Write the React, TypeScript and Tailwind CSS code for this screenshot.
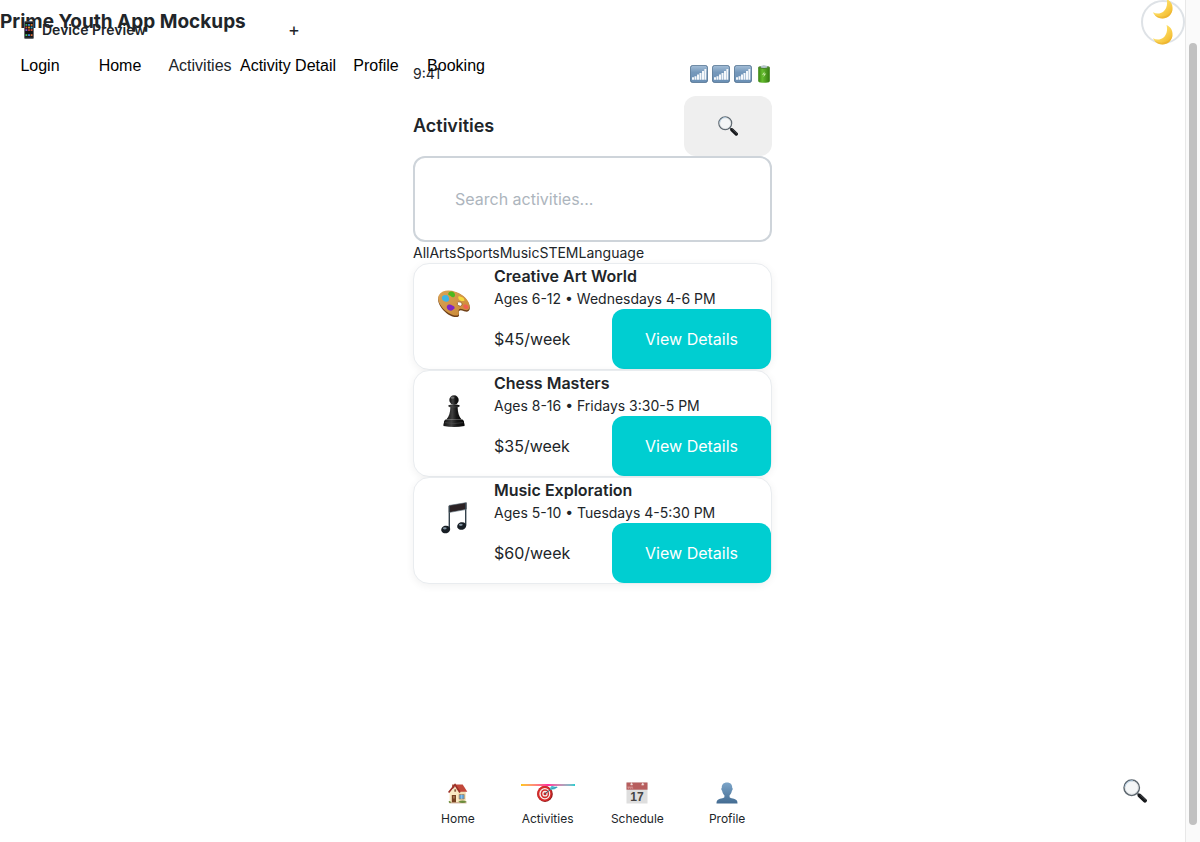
import React from 'react';

function PhoneIcon() {
  return (
    <svg viewBox="0 0 10 18" className="h-[18px] w-2.5" aria-hidden="true">
      <rect x="0.3" y="0.3" width="9.4" height="17.4" rx="1.2" fill="#26282c" stroke="#77797d" strokeWidth="0.5" />
      <rect x="1.2" y="2" width="7.6" height="13.6" fill="#111" />
      {[3, 5.6, 8.2, 13.2].map((y, r) => (
        <g key={y}>
          <rect x="1.5" y={y} width="1.8" height="1.8" fill={['#3aa657', '#d0453a', '#7b5bd6', '#44c767'][r]} />
          <rect x="4.1" y={y} width="1.8" height="1.8" fill={['#3f8ff0', '#e0a030', '#c23b3b', '#3f8ff0'][r]} />
          <rect x="6.7" y={y} width="1.8" height="1.8" fill={['#e07a30', '#3aa6c7', '#cf4f38', '#d66a3a'][r]} />
        </g>
      ))}
    </svg>
  );
}

function MoonIcon() {
  return (
    <svg viewBox="0 0 22 22" className="h-[22px] w-[22px] shrink-0" aria-hidden="true">
      <defs>
        <linearGradient id="moon" x1="0" y1="0" x2="1" y2="1">
          <stop offset="0.35" stopColor="#ffe168" />
          <stop offset="1" stopColor="#efb01f" />
        </linearGradient>
      </defs>
      <path d="M14.500 1c4.200 1.800 6.500 5.700 6 10.200-.6 5.300-4.700 9.300-10.100 9.300-4.300 0-7.700-2.300-9.400-6.200 3.300 1.700 7.200 1.800 10.200-.5 3.500-2.800 4.700-7.900 3.300-12.800z" fill="url(#moon)" />
      <path d="M20.500 11c-.6 5.400-4.700 9.500-10.100 9.500-3.500 0-6.400-1.500-8.300-4.300 6.400 4.800 15.800 2.400 18.400-5.200z" fill="#e8ac2b" opacity=".5" />
    </svg>
  );
}

function SearchIcon({ className }: { className: string }) {
  return (
    <svg viewBox="0 0 24 24" className={className} aria-hidden="true">
      <path d="M14.500 14.500l3 3" stroke="#555b61" strokeWidth="1.800" />
      <path d="M16.600 16.600l5.300 5" stroke="#15171a" strokeWidth="4" strokeLinecap="round" />
      <path d="M17.600 16.300l4.800 4.500" stroke="#666a70" strokeWidth=".7" strokeLinecap="round" />
      <circle cx="8.700" cy="8.700" r="7.700" fill="#f4f6f7" stroke="#5e6870" strokeWidth="1.500" />
      <path d="M2 8a6.900 6.900 0 0 1 8-6.100" fill="none" stroke="#9cc4e6" strokeWidth="1" />
      <circle cx="8.700" cy="8.700" r="6.500" fill="none" stroke="#d5dadd" strokeWidth=".7" />
    </svg>
  );
}

function SignalIcon() {
  return (
    <svg viewBox="0 0 18 18" className="h-[18px] w-[18px]" aria-hidden="true">
      <defs>
        <linearGradient id="signal" x1="0" y1="0" x2="0" y2="1">
          <stop offset="0" stopColor="#a5bfd8" />
          <stop offset=".4" stopColor="#7598bb" />
          <stop offset="1" stopColor="#6a8fb4" />
        </linearGradient>
      </defs>
      <rect x=".4" y=".4" width="17.200" height="17.200" rx="2.400" fill="url(#signal)" stroke="#49698a" strokeWidth=".8" />
      <path d="M2 12.300h2v2.400H2zM4.500 11.200h2v3.500h-2zM7 9.600h2v5.100H7zM9.500 8h2v6.700h-2zM12 6h2v8.700h-2zM14.400 4h1.900v10.700h-1.900z" fill="#f5f8fb" />
    </svg>
  );
}

function BatteryIcon() {
  return (
    <svg viewBox="0 0 12 18" className="h-[18px] w-3" aria-hidden="true">
      <defs>
        <linearGradient id="battery">
          <stop offset="0" stopColor="#38820f" />
          <stop offset=".35" stopColor="#65bd2e" />
          <stop offset="1" stopColor="#32780f" />
        </linearGradient>
      </defs>
      <path d="M.2 2.500v13.400c0 2.500 11.600 2.500 11.600 0V2.500z" fill="url(#battery)" />
      <ellipse cx="6" cy="2.400" rx="5.800" ry="1.700" fill="#4c842e" />
      <ellipse cx="6" cy="1.700" rx="3.500" ry="1.200" fill="#b8c6cf" />
      <path d="M6.600 6.500L4 9.800l2-.2-.6 2.600 2.800-3.600-2 .2z" fill="#c4e8a2" />
    </svg>
  );
}

function PaletteIcon() {
  return (
    <svg viewBox="0 0 32 28" className="h-7 w-8" aria-hidden="true">
      <defs>
        <linearGradient id="palette" x1="0" y1="0" x2="1" y2="1">
          <stop offset="0" stopColor="#dba456" />
          <stop offset="1" stopColor="#c98735" />
        </linearGradient>
      </defs>
      <path d="M1 6C4 .6 11.500.3 18 2.600c7.500 2.600 13 8.300 13.800 14.600.4 3.200-1.700 4.900-4.500 4.400-2.200-.4-4.300-2.300-6-.8-1.900 1.600 1.600 5.300-2 6.200C11 28.400-3.500 14 1 6z" fill="#704018" />
      <path d="M1 5C4-.2 11.500-.3 18 1.900c7.500 2.600 13 8.200 13.700 14.100.4 3-1.700 4.600-4.500 4.100-2.200-.4-4.300-2.400-6-.9-1.900 1.600 1.400 5.600-2 6.300C11 27-3.500 13 1 5z" fill="url(#palette)" />
      <ellipse cx="21.700" cy="14" rx="2.500" ry="2" fill="#fff" stroke="#8a501f" strokeWidth=".6" transform="rotate(25 21.700 14)" />
      <path d="M4 7c1-2.500 3-1.500 4.300-2 2 .3 2.800 2.600 2.900 4.400-.2 2.300-2.400 2.800-4.200 2.200C4.600 10.800 3.400 9.200 4 7z" fill="#3fb5e5" />
      <path d="M10.500 3c1.500-2 4.500-2 6 .2.900 1.900.6 3.500-1 4-2.300.5-2.500-1.500-4.300-1.900-1-.4-1.200-1.300-.7-2.300z" fill="#4cb91e" />
      <path d="M20.500 6.500c1.300-.7 2.100.8 3.200.5 1.800.2 2.800 2 2.700 3.800-1.800.8-4.200 0-5.400-1.400-.8-1-.9-2.100-.5-2.900z" fill="#f6da3c" />
      <path d="M25.600 15c1.500-1.100 4.700.2 5 2.200-.2 1.700-2.200 2.100-3.500 1.600-1.500-.7-2.400-2.400-1.500-3.800z" fill="#ef6052" />
      <path d="M9 16c1.300-1.900 3.700-1.900 5.300-.4 1.900.5 2.700 1.800 2.300 3-1.500.3-1.600 2.400-3.700 2.100-3-.3-4.800-2.500-3.900-4.700z" fill="#8026c4" />
    </svg>
  );
}

function PawnIcon() {
  return (
    <svg viewBox="0 0 22 32" className="h-8 w-[22px]" aria-hidden="true">
      <defs>
        <linearGradient id="pawn">
          <stop offset="0" stopColor="#111" />
          <stop offset=".38" stopColor="#404040" />
          <stop offset=".65" stopColor="#171717" />
          <stop offset="1" stopColor="#060606" />
        </linearGradient>
      </defs>
      <g fill="url(#pawn)">
        <circle cx="11" cy="5" r="4.700" />
        <path d="M5.500 10.200Q11 8.500 16.500 10.200q.8 1.500-1.900 2.100c.3 5.400 1.200 9 4 12.300H3.400c2.800-3.300 3.700-6.900 4-12.300q-2.700-.6-1.900-2.100z" />
        <path d="M2.500 24.500h17q2 1.300 1.500 3.200.8 1 .5 3.300-10.500 2-21 0-.3-2.300.5-3.300-.5-1.900 1.500-3.200z" />
      </g>
      <path d="M6 11.500q5 1.200 10 0M2 27.600q9 2 18 0" fill="none" stroke="#555" strokeWidth=".5" />
      <ellipse cx="9.500" cy="2.800" rx="2" ry="1" fill="#888" opacity=".7" />
    </svg>
  );
}

function MusicIcon() {
  return (
    <svg viewBox="0 0 26 32" className="h-8 w-[26px]" aria-hidden="true">
      <path d="M7.800 3.500L25.500.5v6.800L7.800 10.500z" fill="#2c2224" />
      <path d="M8.300 4v23M24.700 1v22.500" stroke="#34424c" strokeWidth="1.400" />
      <path d="M8 3.500L25.500.6M8 10.500l17-3" stroke="#586975" strokeWidth=".6" />
      <ellipse cx="4.700" cy="27.500" rx="4.500" ry="3.800" fill="#181e25" transform="rotate(-15 4.700 27.500)" />
      <ellipse cx="20.700" cy="24" rx="4.500" ry="3.800" fill="#181e25" transform="rotate(-15 20.700 24)" />
      <ellipse cx="3.800" cy="26.300" rx="1.900" ry="1.100" fill="#8394a2" />
      <ellipse cx="19.800" cy="22.800" rx="1.900" ry="1.100" fill="#8394a2" />
    </svg>
  );
}

function HouseIcon() {
  return (
    <svg viewBox="0 0 20 21" className="h-[21px] w-5" aria-hidden="true">
      <path d="M4 1.500h2.500v4H4z" fill="#b3644f" />
      <path d="M1.800 9L8 4l9.700 4.500v10.700H1.800z" fill="#f3dfb4" />
      <path d="M1.800 9.500L7 4.500l3.500 5v9.700H1.800z" fill="#fae9c3" />
      <path d="M7 1.500h7.700l4.600 7.200H11.500z" fill="#c2483a" />
      <path d="M.6 9.500L7 1.800 12 9.500" fill="none" stroke="#9c3027" strokeWidth="1.700" />
      <path d="M3.800 12h4.200v7.500H3.800z" fill="#774222" />
      <path d="M5 13h1.800v2.500H5z" fill="#a67651" />
      <path d="M11.200 11.500h5v4.500h-5z" fill="#5aa2dc" stroke="#a27b50" strokeWidth=".7" />
      <path d="M13.700 11.500V16" stroke="#d8edf9" strokeWidth=".5" />
      <path d="M1.500 19.300h17v1h-17z" fill="#bd9474" />
      <path d="M.5 18.800q1.300-1.800 2.500.6-1.300 1.500-2.500-.6zm9.800 0q4-2.600 8.500 0-4 2.600-8.500 0z" fill="#6b8d3c" />
      <path d="M6.300 6.300h1.800v2.400H6.300z" fill="#8b5d40" />
    </svg>
  );
}

function TargetIcon() {
  return (
    <svg viewBox="0 0 21 18" className="h-[18px] w-[21px]" aria-hidden="true">
      <ellipse cx="8" cy="10" rx="7.800" ry="7.900" fill="#8f1717" />
      <ellipse cx="7.500" cy="9.700" rx="7.300" ry="7.600" fill="#d52c2b" />
      <ellipse cx="7.800" cy="9.700" rx="5.500" ry="5.700" fill="#f6f2ee" />
      <ellipse cx="7.900" cy="9.700" rx="4.200" ry="4.500" fill="#d52c2b" />
      <ellipse cx="8" cy="9.700" rx="2.700" ry="2.900" fill="#f6f2ee" />
      <circle cx="8" cy="9.700" r="1.500" fill="#c92829" />
      <path d="M8 9.700l8-6" stroke="#35616f" strokeWidth="1" />
      <path d="M13 4l3-4 .5 2.500L21 3l-3.300 2.200-4.200.6z" fill="#50bfd1" />
      <path d="M14.500 4.800L20 3" stroke="#267f98" strokeWidth=".6" />
    </svg>
  );
}

function CalendarIcon() {
  return (
    <svg viewBox="0 0 22 22" className="h-[22px] w-[22px]" aria-hidden="true">
      <rect x=".5" y=".5" width="21" height="21" fill="#dedede" />
      <path d="M.5.500h21v7.200H.5z" fill="#b75e5e" />
      <path d="M2 4.500v1.700h1V4.500m1 0v1.700h1.200V4.500m1 0v1.700h1" fill="none" stroke="#e9b6b3" strokeWidth=".6" />
      <path d="M4.700 2.900L5.500.5l1 2.400zm11 .2l1-2.300 1.200 2.100z" fill="#f7eeee" stroke="#eed2d0" strokeWidth=".7" />
      <text x="11" y="19" textAnchor="middle" fontFamily="Liberation Sans, sans-serif" fontSize="12" fontWeight="700" fill="#444">17</text>
    </svg>
  );
}

function PersonIcon() {
  return (
    <svg viewBox="0 0 22 22" className="h-[22px] w-[22px]" aria-hidden="true">
      <defs>
        <linearGradient id="person" x1="0" y1="0" x2="0" y2="1">
          <stop offset="0" stopColor="#7ca5c9" />
          <stop offset="1" stopColor="#446c92" />
        </linearGradient>
      </defs>
      <path d="M11 .5c3.500 0 5.400 2.200 5.200 5.300.8.4.6 2.300-.3 3-.4 2.200-1.300 3.600-2.300 4.400v2c.5 1.100 5.800 1.300 7 3 .8 1 .9 2 .9 3.300H.5c0-1.300.1-2.300.9-3.300 1.200-1.700 6.500-1.900 7-3v-2c-1-.8-1.900-2.200-2.300-4.400-.9-.7-1.100-2.600-.3-3C5.600 2.700 7.500.5 11 .5z" fill="url(#person)" />
    </svg>
  );
}

const screens = ['Login', 'Home', 'Activities', 'Activity Detail', 'Profile', 'Booking'];
const categories = ['All', 'Arts', 'Sports', 'Music', 'STEM', 'Language'];
const activities = [
  { name: 'Creative Art World', info: 'Ages 6-12 • Wednesdays 4-6 PM', price: '$45/week', icon: <PaletteIcon /> },
  { name: 'Chess Masters', info: 'Ages 8-16 • Fridays 3:30-5 PM', price: '$35/week', icon: <PawnIcon /> },
  { name: 'Music Exploration', info: 'Ages 5-10 • Tuesdays 4-5:30 PM', price: '$60/week', icon: <MusicIcon /> },
];
const tabs = [
  { name: 'Home', icon: <HouseIcon /> },
  { name: 'Activities', icon: <TargetIcon /> },
  { name: 'Schedule', icon: <CalendarIcon /> },
  { name: 'Profile', icon: <PersonIcon /> },
];

function ActivityCard({ name, info, price, icon }: (typeof activities)[number]) {
  return (
    <article className="flex rounded-2xl border border-[#e9ecef] bg-white shadow-[0_2px_8px_rgba(0,0,0,0.06)]">
      <div className="flex size-20 shrink-0 items-center justify-center">{icon}</div>
      <div className="min-w-0 flex-1">
        <h3 className="text-base leading-6 font-semibold">{name}</h3>
        <p className="text-sm leading-[21px]">{info}</p>
        <div className="flex items-center justify-between">
          <span>{price}</span>
          <button className="h-[60px] rounded-xl bg-[#00ced1] px-[33px] text-white">View Details</button>
        </div>
      </div>
    </article>
  );
}

export default function App() {
  return (
    <div className="flex min-h-screen bg-white font-['Inter',sans-serif] text-base text-[#212529]">
      <div className="relative flex min-w-0 flex-1 flex-col">
        <header className="flex h-11 items-center justify-between">
          <h1 className="text-[19px] font-bold">Prime Youth App Mockups</h1>
          <button aria-label="Toggle theme" className="flex size-11 flex-col items-center justify-center gap-1 rounded-full border-2 border-[#dee2e6]">
            <MoonIcon />
            <MoonIcon />
          </button>
        </header>

        <section className="absolute top-5 left-6 flex w-[276px] items-center justify-between">
          <h2 className="flex items-center gap-2 text-sm font-semibold"><PhoneIcon />Device Preview</h2>
          <button aria-label="Expand preview" className="text-lg leading-5">+</button>
        </section>
        <nav aria-label="Screens" className="absolute top-[54px] left-0 z-10 flex font-['Liberation_Sans',sans-serif]">
          {screens.map((s) => (
            <button key={s} className={s === 'Activities' ? 'min-w-20 text-[#212529]' : 'min-w-20 text-black'}>{s}</button>
          ))}
        </nav>

        <main className="mx-auto flex w-full max-w-[359px] flex-1 flex-col pt-5">
          <div className="flex h-5 items-center justify-between text-sm">
            <span>9:41</span>
            <div className="flex items-center gap-1">
              <SignalIcon />
              <SignalIcon />
              <SignalIcon />
              <span className="px-0.5"><BatteryIcon /></span>
            </div>
          </div>
          <div className="mt-3 flex items-center justify-between">
            <h2 className="text-lg font-semibold">Activities</h2>
            <button aria-label="Search" className="flex h-[60px] w-[88px] items-center justify-center rounded-xl bg-[#efefef]">
              <SearchIcon className="size-5" />
            </button>
          </div>
          <input
            type="search"
            aria-label="Search activities"
            placeholder="Search activities..."
            className="h-[86px] w-full rounded-xl border-2 border-[#ced4da] px-10 placeholder:text-[#adb5bd]"
          />
          <div className="flex text-sm leading-[21px]">
            {categories.map((c) => <button key={c}>{c}</button>)}
          </div>
          {activities.map((a) => <ActivityCard key={a.name} {...a} />)}

          <nav aria-label="Main" className="mt-auto grid grid-cols-4 pb-3.5">
            {tabs.map((t) => (
              <a key={t.name} href="#" className="relative flex flex-col items-center text-xs leading-[18px]">
                {t.name === 'Activities' && (
                  <span className="absolute top-2 z-10 h-0.5 w-[54px] bg-linear-to-r from-[#ffc700] via-[#ff2c9c] to-[#00ced1]" />
                )}
                <span className="flex h-[34px] items-center">{t.icon}</span>
                {t.name}
              </a>
            ))}
          </nav>
        </main>

        <button aria-label="Find" className="fixed right-[53px] bottom-[39px]">
          <SearchIcon className="size-6" />
        </button>
      </div>

      <div aria-hidden="true" className="flex w-[15px] shrink-0 justify-center border-l border-[#e8e8e8] bg-[#fafafa] pt-[43px] pb-[17px]">
        <div className="w-2 rounded-full bg-[#c1c1c1]" />
      </div>
    </div>
  );
}
